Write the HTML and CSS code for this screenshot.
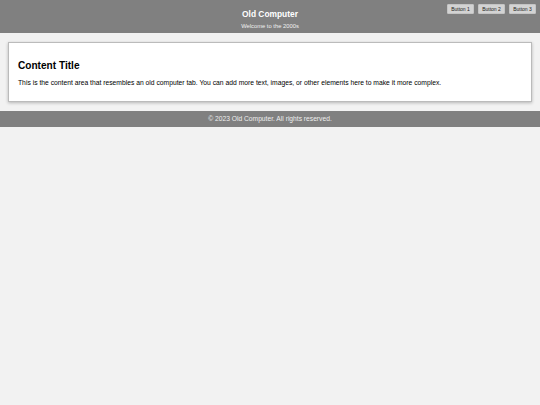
FILE: index.html
```html
<!DOCTYPE html>
<html lang="en">
<head>
    <meta charset="UTF-8" />
    <meta name="viewport" content="width=device-width, initial-scale=1" />
    <title>Old Computer</title>
    <link rel="stylesheet" href="styles.css">
</head>
<body>
    <header class="header">
        <h1>Old Computer</h1>
        <p>Welcome to the 2000s</p>
        <div class="buttons">
            <button>Button 1</button>
            <button>Button 2</button>
            <button>Button 3</button>
        </div>
    </header>

    <div class="content">
        <h2>Content Title</h2>
        <p>This is the content area that resembles an old computer tab. You can add more text, images, or other elements here to make it more complex.</p>
    </div>

    <footer class="footer">
        <p>&copy; 2023 Old Computer. All rights reserved.</p>
    </footer>
</body>
</html>
```

FILE: styles.css
```css
body { font-family: "Liberation Sans", Arial, sans-serif; font-size: 6.75px; margin: 0; background-color: #f2f2f2; color: #000; }
.header { position: relative; background-color: #808080; color: white; text-align: center; height: 33px; box-sizing: border-box; padding-top: 9px; }
.header h1 { font-size: 8.4px; margin: 0; line-height: 11px; }
.header p { font-size: 5.8px; margin: 2px 0 0; line-height: 8px; color: #f0f0f0; }
.buttons { position: absolute; top: 4px; right: 4px; display: flex; gap: 4px; }
.buttons button { font-family: inherit; font-size: 5px; width: 27px; height: 10px; padding: 0; background-color: #d3d3d3; border: 1px solid #c4c4c4; border-radius: 1px; color: #222; }
.content { background-color: white; margin: 9px 8px; padding: 10px 9px 14px; border: 1px solid #bbb; box-shadow: 0 1px 3px rgba(0, 0, 0, 0.25); }
.content h2 { font-size: 10.1px; margin: 7px 0 7px; }
.content p { margin: 0; line-height: 9px; }
.footer { background-color: #808080; color: #eee; text-align: center; height: 16px; line-height: 16px; }
.footer p { margin: 0; font-size: 6.7px; }
```
